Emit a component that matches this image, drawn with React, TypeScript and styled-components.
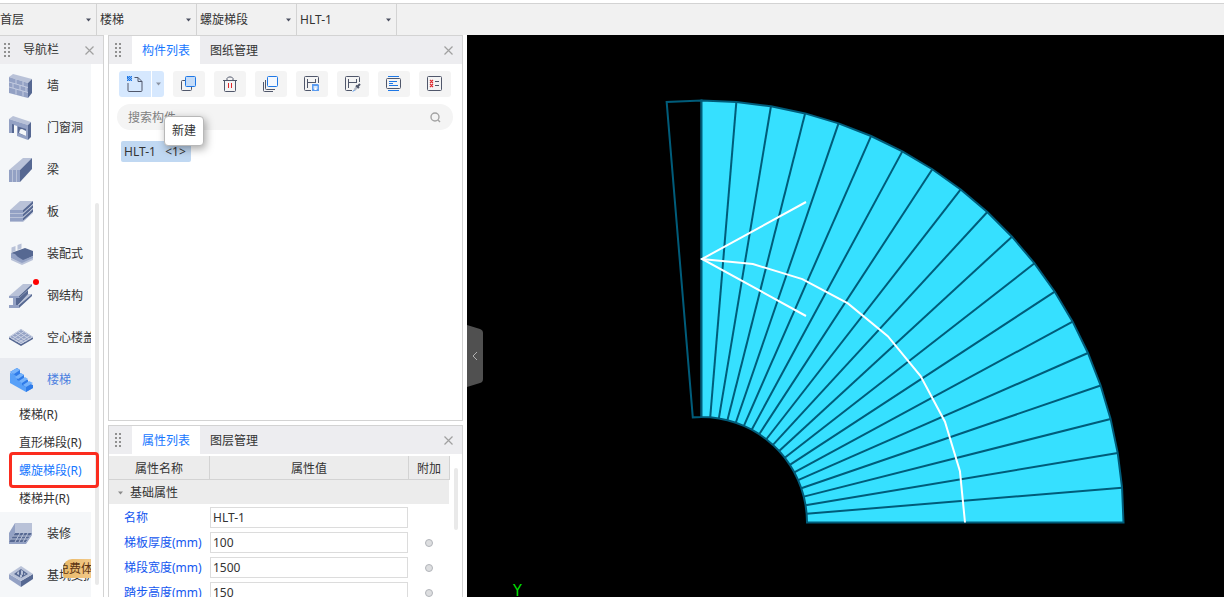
import React from "react";
import styled, { createGlobalStyle, css } from "styled-components";

const GlobalStyle = createGlobalStyle`
  * { box-sizing: border-box; }
  html, body, #root { height: 100%; }
  body {
    margin: 0;
    overflow: hidden;
    background: #fff;
    color: #333;
    font: 12px/20px "Noto Sans", "Noto Sans CJK SC", sans-serif;
  }
  button, input, select { font: inherit; color: inherit; margin: 0; }
  button { border: 0; padding: 0; background: none; cursor: pointer; }
  a { color: inherit; text-decoration: none; }
`;

const LINE = "#d3d3d3";
const LIGHT = "#b9c2d8";
const MID = "#93a1c4";
const DARK = "#566892";

const Page = styled.div`
  height: 100vh;
  display: flex;
  flex-direction: column;
  padding-top: 3px;
  overflow: hidden;
`;

/* ---------- context bar ---------- */

const ContextBar = styled.header`
  flex: none;
  display: flex;
  height: 32px;
  background: #f1f1f1;
  border-top: 1px solid ${LINE};
`;

const Picker = styled.label<{ $first?: boolean }>`
  position: relative;
  display: flex;
  width: ${(p) => (p.$first ? 97 : 100)}px;
  border-right: 1px solid ${LINE};

  select {
    appearance: none;
    width: 100%;
    border: 0;
    padding: 0 20px 0 ${(p) => (p.$first ? 0 : 3)}px;
    background: transparent;
    outline: none;
  }
  svg {
    position: absolute;
    right: 5px;
    top: 14px;
    pointer-events: none;
  }
`;

const Body = styled.main`
  flex: 1;
  min-height: 0;
  display: flex;
`;

/* ---------- shared dock pieces ---------- */

const DockHeader = styled.div`
  flex: none;
  display: flex;
  align-items: center;
  height: 28px;
  background: #ededf0;
`;

const CloseButton = styled.button`
  display: flex;
  margin-left: auto;
  margin-right: 9px;
`;

const Grip = styled.svg`
  flex: none;
  margin: 0 11px 0 6px;
`;

const ScrollThumb = styled.div<{ $top: number; $height: number }>`
  flex: none;
  width: 4px;
  height: ${(p) => p.$height}px;
  margin: ${(p) => p.$top}px 4px 0;
  border-radius: 2px;
  background: #e9e9e9;
`;

/* ---------- navigation ---------- */

const Nav = styled.nav`
  flex: none;
  display: flex;
  flex-direction: column;
  width: 104px;
  border: solid ${LINE};
  border-width: 1px 1px 0 0;

  ${Grip} { margin: 0 13px 0 4px; }
`;

const NavScroll = styled.div`
  flex: 1;
  min-height: 0;
  display: flex;
`;

const NavList = styled.ul`
  flex: 1;
  min-width: 0;
  margin: 0;
  padding: 0;
  overflow: hidden;
  list-style: none;
  background: #f5f7f9;
`;

const NavLink = styled.a<{ $active?: boolean }>`
  position: relative;
  display: flex;
  align-items: center;
  gap: 14px;
  height: 42px;
  padding: 2px 0 0 9px;
  white-space: nowrap;
  overflow: hidden;
  ${(p) => p.$active && css`background: #e9ebf0; color: #4b7fe0;`}

  svg { flex: none; overflow: visible; }
`;

const NewDot = styled.i`
  position: absolute;
  left: 33px;
  top: 5px;
  width: 6px;
  height: 6px;
  border-radius: 50%;
  background: #f00;
`;

const TrialBadge = styled.span`
  position: absolute;
  left: 63px;
  top: 5px;
  width: 40px;
  height: 19px;
  border-radius: 9px 0 0 3px;
  overflow: hidden;
  background: linear-gradient(90deg, #e8b765, #f6d19a);
  color: #5c3413;
  line-height: 20px;
  text-indent: -6px;
`;

const SubList = styled.ul`
  margin: 0;
  padding: 0;
  list-style: none;
  background: #fff;
`;

const SubLink = styled.a<{ $active?: boolean }>`
  display: block;
  height: 28px;
  padding: 1px 0 0 19px;
  line-height: 28px;
  white-space: nowrap;
  ${(p) => p.$active && css`color: #1677ff;`}
`;

const Highlight = styled.div`
  position: absolute;
  left: 9px;
  top: 452px;
  width: 90px;
  height: 36px;
  border: 3px solid #fb2c1e;
  border-radius: 4px;
  pointer-events: none;
`;

/* ---------- docks ---------- */

const Docks = styled.div`
  flex: none;
  display: flex;
  flex-direction: column;
  gap: 4px;
  width: 363px;
  padding: 0 4px;
`;

const Dock = styled.section<{ $height?: number }>`
  flex: ${(p) => (p.$height ? `0 0 ${p.$height}px` : "1")};
  min-height: 0;
  display: flex;
  flex-direction: column;
  overflow: hidden;
  border: 1px solid ${LINE};
  border-bottom-width: ${(p) => (p.$height ? 1 : 0)}px;
`;

const Tab = styled.button<{ $active?: boolean }>`
  height: 28px;
  padding: 2px 10px 0;
  ${(p) => p.$active && css`background: #fff; color: #1677ff;`}
`;

const Toolbar = styled.div`
  display: flex;
  gap: 9px;
  padding: 7px 10px;
`;

const toolFace = css`
  display: flex;
  align-items: center;
  justify-content: center;
  height: 26px;
`;

const Tool = styled.button`
  ${toolFace}
  width: 32px;
  border-radius: 3px;
  background: #f4f4f4;
`;

const SplitTool = styled.div`
  position: relative;
  display: flex;
  gap: 1px;
`;

const SplitMain = styled.button`
  ${toolFace}
  width: 32px;
  border-radius: 3px 0 0 3px;
  background: #d6e8fe;
`;

const SplitMore = styled.button`
  ${toolFace}
  width: 12px;
  border-radius: 0 3px 3px 0;
  background: #d6e8fe;
`;

const Tooltip = styled.div`
  position: absolute;
  z-index: 1;
  left: 45px;
  top: 45px;
  padding: 4px 7px;
  border: 1px solid #b8b8b8;
  border-radius: 4px;
  background: #fff;
  box-shadow: 2px 3px 9px rgba(0, 0, 0, 0.35);
  white-space: nowrap;
`;

const Search = styled.label`
  display: flex;
  align-items: center;
  height: 26px;
  margin: 0 9px 11px 8px;
  padding: 0 12px 0 11px;
  border-radius: 13px;
  background: #f4f4f4;

  input {
    flex: 1;
    min-width: 0;
    border: 0;
    padding: 2px 0 0;
    outline: none;
    background: transparent;
  }
  input::placeholder { color: #808080; opacity: 1; }
`;

const Component = styled.button`
  align-self: flex-start;
  height: 21px;
  margin-left: 12px;
  padding: 0 5px 0 3px;
  border-radius: 2px;
  background: #c0d8f2;
  white-space: pre;
`;

/* ---------- properties ---------- */

const PropertyScroll = styled.div`
  flex: 1;
  min-height: 0;
  display: flex;
  padding-top: 2px;
  overflow: hidden;
`;

const PropertyTable = styled.table`
  flex: 1;
  align-self: flex-start;
  table-layout: fixed;
  width: 100%;
  border-collapse: separate;
  border-spacing: 0;

  th, td { padding: 0; }
  td:last-child { padding-right: 2px; }
  thead th {
    height: 24px;
    padding-top: 2px;
    border: solid ${LINE};
    border-width: 0 1px 1px 0;
    background: #ececec;
    font-weight: 400;
  }
`;

const GroupCell = styled.th`
  height: 25px;
  border-right: 1px solid #fff;
  border-bottom: 1px solid #fff;
  background: #ececec;
  font-weight: 400;
  text-align: left;

  button {
    display: flex;
    align-items: center;
    gap: 7px;
    padding: 2px 0 0 9px;
  }
`;

const NameCell = styled.th`
  height: 25px;
  font-weight: 400;
  text-align: left;
  color: #1457f0;
  white-space: nowrap;

  label { padding-left: 15px; }
`;

const Field = styled.input`
  display: block;
  width: 198px;
  height: 21px;
  padding: 0 2px;
  border: 1px solid #dcdcdc;
  outline: none;
`;

const Extra = styled.input`
  appearance: none;
  display: block;
  width: 8px;
  height: 8px;
  && { margin: 0 auto; }
  border: 1px solid #b2b5ba;
  border-radius: 50%;
  background: #dddee0;
`;

/* ---------- model view ---------- */

const Viewport = styled.section`
  position: relative;
  flex: 1;
  min-width: 0;
  background: #000;
  overflow: hidden;
`;

const Drawing = styled.svg`
  display: block;
  width: 100%;
  height: 100%;
`;

const CollapseHandle = styled.button`
  position: absolute;
  left: 0;
  top: 290px;
  width: 16px;
  height: 62px;

  svg { display: block; }
`;

/* ---------- small glyphs ---------- */

const Caret = ({ color = "#4c5061" }: { color?: string }) => (
  <svg width="5" height="4" viewBox="0 0 5 4"><path d="M0 .5h5L2.500 3.500z" fill={color} /></svg>
);

const Cross = () => (
  <svg width="9" height="9" viewBox="0 0 9 9">
    <path d="M.5.5l8 8M8.500.5l-8 8" stroke="#a0a0a0" strokeWidth="1.200" fill="none" />
  </svg>
);

const GripDots = () => (
  <Grip width="6" height="14" viewBox="0 0 6 14">
    {[0, 4, 8, 12].map((y) => (
      <path key={y} d={`M0 ${y}h2v2h-2zM4 ${y}h2v2h-2z`} fill="#909090" />
    ))}
  </Grip>
);

/* ---------- navigation icons ---------- */

const navIcons: Record<string, React.ReactNode> = {
  wall: (
    <>
      <path d="M0 3l4-3 19 5-4 4z" fill={LIGHT} />
      <path d="M0 3l19 6v15L0 19z" fill={MID} />
      <path d="M19 9l4-4v14l-4 5z" fill={DARK} />
      <path d="M0 8l19 5.500M0 13l19 5.500M7 5v5M14 7.500v5M4 9v5M11 11v5M17 13v5M7 15v5.500M14 17v5.500" stroke="#c3cbe0" fill="none" />
    </>
  ),
  door: (
    <>
      <path d="M0 3l4-3 18 6-3 3z" fill={LIGHT} />
      <path d="M0 3l19 6v15L8 20V10L5 9v8H0z" fill={MID} />
      <path d="M19 9l3-3v15l-3 3z" fill={DARK} />
      <path d="M3 8l2 .6V17H3z" fill={DARK} />
      <path d="M9 10.500l8 2.500v7l-8-3z" fill={DARK} />
      <path d="M10 17l1-3.500 2-.5 4 2v5z" fill="#f5f7f9" />
    </>
  ),
  beam: (
    <>
      <path d="M0 12L14 0h9L11 12z" fill={LIGHT} />
      <path d="M0 12h11v12H0z" fill={MID} />
      <path d="M11 12L23 0v11L11 24z" fill={DARK} />
      <path d="M3.500 12v12M7.500 12v12" stroke={LIGHT} />
    </>
  ),
  slab: (
    <>
      <path d="M1 10L11 1h13L14 10z" fill={LIGHT} />
      {[10, 14, 18].map((y) => (
        <g key={y}>
          <path d={`M1 ${y}h13v3H1z`} fill={MID} />
          <path d={`M14 ${y}l10-9v3L14 ${y + 3}z`} fill={DARK} />
          <path d={`M1 ${y + 3.5}h13l10-9`} stroke={LIGHT} fill="none" />
        </g>
      ))}
    </>
  ),
  prefab: (
    <>
      <path d="M2.500 5.500l4-1.500v5l-4 1.500zM8.500 3l4-1.500v5l-4 1.500z" fill={LIGHT} />
      <path d="M2 11l14-5 8 3v5l-10 5z" fill={DARK} />
      <path d="M2 11l4 1 3 3 5 3 10-4v3l-11 5-11-6z" fill={MID} />
      <path d="M2 16l11 5 11-5v2l-11 5-11-5z" fill={LIGHT} />
    </>
  ),
  steel: (
    <>
      <path d="M0 12L14 0h9L10 12z" fill={LIGHT} />
      <path d="M7 14h3L19 6v5L9 21H7z" fill={DARK} />
      <path d="M9 21l10-11h4L10 21z" fill={LIGHT} />
      <path d="M10 12L23 0v2L10 14zM10 21l13-11v2L10 24z" fill={DARK} />
      <path d="M0 12h10v2H7v7h3v3H0v-3h4v-7H0z" fill={MID} />
    </>
  ),
  hollow: (
    <>
      <path d="M0 11l12 7 12-7v2l-12 7-12-7z" fill={DARK} />
      <path d="M12 3l12 8-12 7L0 11z" fill={MID} />
      <path d="M12 3.500L23.500 11 12 17.500.5 11zM9 5.500l11.500 7.500M6 7.500L17.500 15M3 9.500L14.500 16.500M15 5.500L3.500 13M18 7.500L6.500 15M21 9.500L9.500 16.500" stroke="#c9d0e2" fill="none" />
    </>
  ),
  stair: (
    <>
      <path d="M1 5v10l16 9 7-4v-2L8 6z" fill="#58a0f8" />
      <path d="M1 4l7-4 3 2v3l4 2v3l4 2v3l5 2v3l-7 4v-5l-4-2v-3l-5-2v-3L6 7z" fill="#2f7be8" />
      <path d="M1 4l7-4 3 2-6 4zM6 9l6-4 3 2-6 4zM10 13l6-4 3 2-6 4zM14 17l6-4 4 2-7 4z" fill="#76b3fc" />
    </>
  ),
  finish: (
    <>
      <path d="M6 1h17v10H6L0 20v-9z" fill={MID} />
      <path d="M6 1h17v10H6z" fill={LIGHT} />
      <path d="M6 11h17l-6 9H0z" fill={DARK} />
      <path d="M4 14h17M2 17h17M11 11l-5 9M15 11l-5 9M19 11l-5 9" stroke={LIGHT} />
      <path d="M0 20h17l6-9v2l-6 9H0z" fill={MID} />
    </>
  ),
  pit: (
    <>
      <path d="M0 10l12 7v6L0 15z" fill={MID} />
      <path d="M12 17l12-7v5l-12 8z" fill={DARK} />
      <path d="M12 2l12 8-12 7L0 10z" fill={LIGHT} />
      <path d="M12 5l7 5-7 4-7-4z" fill={DARK} />
      <path d="M8 9l2-2v4l-2-1zM12 6l2 1v4l-2-1zM11 11l2-1v3l-2 1zM15 9l2 1-2 1z" fill={LIGHT} />
    </>
  ),
};

const NavIcon = ({ name }: { name: string }) => (
  <svg width="24" height="24" viewBox="0 0 24 24">{navIcons[name]}</svg>
);

/* ---------- toolbar icons ---------- */

const INK = "#50576b";
const BLUE = "#1f78e6";

const toolIcons: Record<string, React.ReactNode> = {
  add: (
    <>
      <path d="M7.500 1.500H11l4 4v9a1 1 0 0 1-1 1H2a1 1 0 0 1-1-1V7M11 1.500v4h4" stroke={INK} fill="none" />
      <path d="M0 0h1v1h1v1H0zM2 0h1v1H2zM4 0h1v1H4zM1 1h1v1H1zM3 1h1v1H3zM0 2h1v1H0zM2 2h1v1H2zM4 2h1v1H4zM1 3h1v1H1zM3 3h1v1H3zM0 4h1v1H0zM2 4h1v1H2zM4 4h1v1H4z" fill={BLUE} />
      <path d="M0 0h5v5H0z" fill={BLUE} opacity=".45" />
    </>
  ),
  copy: (
    <>
      <path d="M4.500 4.500h-3a1 1 0 0 0-1 1v8a1 1 0 0 0 1 1h8a1 1 0 0 0 1-1v-3" stroke={INK} fill="none" />
      <rect x="4.500" y=".5" width="10" height="10" rx="1" stroke={BLUE} fill="#c5dcf8" />
    </>
  ),
  remove: (
    <>
      <path d="M1 4.500h14M5 4V2.500l1.500-1.500h3L11 2.500V4M2.500 4.500v10a1 1 0 0 0 1 1h9a1 1 0 0 0 1-1v-10" stroke={INK} fill="none" />
      <path d="M6.500 7v5M9.500 7v5" stroke="#e0252b" />
    </>
  ),
  layers: (
    <>
      <path d="M.5 6v8.500a1 1 0 0 0 1 1H10M2.500 4v8.500a1 1 0 0 0 1 1H12" stroke={INK} fill="none" />
      <rect x="4.500" y=".5" width="10" height="10" rx="1" stroke={BLUE} fill="#f4f8fe" />
    </>
  ),
  save: (
    <>
      <path d="M7 14.500H1.500a1 1 0 0 1-1-1v-12a1 1 0 0 1 1-1h12a1 1 0 0 1 1 1V7M3.500 3v9M3.500 6.500H11M11.500 3v4" stroke={INK} fill="none" />
      <path d="M8 8h6l1 1v6H8z" fill="#5b9cf0" />
      <path d="M9.500 10h4v3h-4z" fill="#d7e6fb" />
      <path d="M10 14l1.500-2.500L13 14z" fill="#fff" />
    </>
  ),
  pick: (
    <>
      <path d="M7 14.500H1.500a1 1 0 0 1-1-1v-12a1 1 0 0 1 1-1h12a1 1 0 0 1 1 1V6M3.500 3v9M3.500 6.500H11M11.500 3v4" stroke={INK} fill="none" />
      <path d="M9.500 14l3-3.500" stroke="#b4b9c4" strokeWidth="2.500" />
      <path d="M11 9.500l3 2.500M13 10l2-2" stroke={INK} strokeWidth="2" />
      <path d="M8 15.500l1.500-1.500" stroke={BLUE} />
    </>
  ),
  list: (
    <>
      <path d="M2 .5h11M2 14.500h11" stroke={BLUE} />
      <rect x=".5" y="2.500" width="14" height="10" rx="1" stroke={INK} fill="none" />
      <path d="M3 5.500h8M3 7.500h4M3 9.500h9" stroke={BLUE} />
    </>
  ),
  check: (
    <>
      <rect x=".5" y=".5" width="14" height="14" rx="1" stroke={INK} fill="none" />
      <path d="M3 4l3 3M6 4l-3 3M3 8l3 3M6 8l-3 3" stroke="#e02a2f" strokeWidth="1.200" />
      <path d="M8 5.500h4M8 9.500h4" stroke={INK} />
    </>
  ),
};

const ToolIcon = ({ name }: { name: string }) => (
  <svg width="16" height="16" viewBox="0 0 16 16">{toolIcons[name]}</svg>
);

/* ---------- spiral stair ---------- */

const STEPS = 19;
const CENTER = { x: 234.5, y: 487.5 };
const INNER = 105.5;
const OUTER = 422;
const WALK = 263.5;

const polar = (radius: number, turn: number) => {
  const a = (turn * Math.PI) / 2;
  return `${(CENTER.x + radius * Math.sin(a)).toFixed(2)},${(CENTER.y - radius * Math.cos(a)).toFixed(2)}`;
};

const range = (n: number) => Array.from({ length: n + 1 }, (_, i) => i / n);

const SpiralStair = () => {
  const outer = range(STEPS).map((t) => polar(OUTER, t));
  const inner = range(STEPS).map((t) => polar(INNER, t));
  const before = -1 / STEPS;
  return (
    <g strokeWidth="2" fill="none">
      <polygon points={[polar(INNER, 0), polar(INNER, before), polar(OUTER, before), polar(OUTER, 0)].join(" ")} stroke="#005c7a" />
      <polygon points={[...outer, ...[...inner].reverse()].join(" ")} fill="#36e0ff" stroke="#005c7a" />
      {outer.slice(1, -1).map((p, i) => (
        <polyline key={p} points={`${inner[i + 1]} ${p}`} stroke="#005c7a" />
      ))}
      <polyline points={range(8).map((t) => polar(WALK, t)).join(" ")} stroke="#fff" />
      <polyline points="339,167 235,224 339,281" stroke="#fff" />
    </g>
  );
};

/* ---------- data ---------- */

const pickers = ["首层", "楼梯", "螺旋梯段", "HLT-1"];

const navBefore = [
  ["wall", "墙"], ["door", "门窗洞"], ["beam", "梁"], ["slab", "板"],
  ["prefab", "装配式"], ["steel", "钢结构"], ["hollow", "空心楼盖"],
];

const stairKinds = ["楼梯(R)", "直形梯段(R)", "螺旋梯段(R)", "楼梯井(R)"];

const tools = [
  ["copy", "复制"], ["remove", "删除"], ["layers", "层间复制"], ["save", "存档"],
  ["pick", "提取"], ["list", "列表"], ["check", "检查"],
];

const properties = [
  { name: "名称", value: "HLT-1", extra: false },
  { name: "梯板厚度(mm)", value: "100", extra: true },
  { name: "梯段宽度(mm)", value: "1500", extra: true },
  { name: "踏步高度(mm)", value: "150", extra: true },
];

export default function App() {
  return (
    <Page>
      <GlobalStyle />
      <ContextBar>
        {pickers.map((text, i) => (
          <Picker key={text} $first={i === 0}>
            <select aria-label={text}><option>{text}</option></select>
            <Caret />
          </Picker>
        ))}
      </ContextBar>
      <Body>
        <Nav>
          <DockHeader>
            <GripDots />
            导航栏
            <CloseButton aria-label="关闭导航栏"><Cross /></CloseButton>
          </DockHeader>
          <NavScroll>
            <NavList>
              {navBefore.map(([icon, text]) => (
                <li key={icon}>
                  <NavLink href="#">
                    <NavIcon name={icon} />{text}
                    {icon === "steel" && <NewDot />}
                  </NavLink>
                </li>
              ))}
              <li>
                <NavLink href="#" $active><NavIcon name="stair" />楼梯</NavLink>
                <SubList>
                  {stairKinds.map((text, i) => (
                    <li key={text}><SubLink href="#" $active={i === 2}>{text}</SubLink></li>
                  ))}
                </SubList>
              </li>
              <li><NavLink href="#"><NavIcon name="finish" />装修</NavLink></li>
              <li>
                <NavLink href="#">
                  <NavIcon name="pit" />基坑支护
                  <TrialBadge>免费体验</TrialBadge>
                </NavLink>
              </li>
            </NavList>
            <ScrollThumb $top={139} $height={382} />
          </NavScroll>
          <Highlight />
        </Nav>

        <Docks>
          <Dock $height={386}>
            <DockHeader>
              <GripDots />
              <Tab $active>构件列表</Tab>
              <Tab>图纸管理</Tab>
              <CloseButton aria-label="关闭构件列表"><Cross /></CloseButton>
            </DockHeader>
            <Toolbar>
              <SplitTool>
                <SplitMain aria-label="新建"><ToolIcon name="add" /></SplitMain>
                <SplitMore aria-label="更多新建"><Caret color="#8a93a3" /></SplitMore>
                <Tooltip role="tooltip">新建</Tooltip>
              </SplitTool>
              {tools.map(([icon, label]) => (
                <Tool key={icon} aria-label={label}><ToolIcon name={icon} /></Tool>
              ))}
            </Toolbar>
            <Search>
              <input aria-label="搜索构件" placeholder="搜索构件..." />
              <svg width="11" height="11" viewBox="0 0 11 11">
                <circle cx="5" cy="5" r="4" stroke="#a3a3a3" strokeWidth="1.400" fill="none" />
                <path d="M8 8l2 2" stroke="#a3a3a3" strokeWidth="1.400" />
              </svg>
            </Search>
            <Component>{"HLT-1   <1>"}</Component>
          </Dock>

          <Dock>
            <DockHeader>
              <GripDots />
              <Tab $active>属性列表</Tab>
              <Tab>图层管理</Tab>
              <CloseButton aria-label="关闭属性列表"><Cross /></CloseButton>
            </DockHeader>
            <PropertyScroll>
              <PropertyTable>
                <colgroup>
                  <col style={{ width: 101 }} />
                  <col />
                  <col style={{ width: 41 }} />
                </colgroup>
                <thead>
                  <tr>
                    <th scope="col">属性名称</th>
                    <th scope="col">属性值</th>
                    <th scope="col">附加</th>
                  </tr>
                </thead>
                <tbody>
                  <tr>
                    <GroupCell colSpan={3} scope="rowgroup">
                      <button><Caret color="#8a8a8a" />基础属性</button>
                    </GroupCell>
                  </tr>
                  {properties.map((p, i) => (
                    <tr key={p.name}>
                      <NameCell scope="row"><label htmlFor={`prop-${i}`}>{p.name}</label></NameCell>
                      <td><Field id={`prop-${i}`} defaultValue={p.value} /></td>
                      <td>{p.extra && <Extra type="checkbox" aria-label={`附加 ${p.name}`} />}</td>
                    </tr>
                  ))}
                </tbody>
              </PropertyTable>
              <ScrollThumb $top={12} $height={62} />
            </PropertyScroll>
          </Dock>
        </Docks>

        <Viewport>
          <Drawing>
            <SpiralStair />
            <text x="46" y="561" fill="#00e000" fontFamily="DejaVu Sans Condensed, DejaVu Sans, sans-serif" fontSize="16">Y</text>
          </Drawing>
          <CollapseHandle aria-label="收起面板">
            <svg width="16" height="62" viewBox="0 0 16 62">
              <path d="M0 0l13 4q3 1 3 4v46q0 3-3 4L0 62z" fill="#505050" />
              <path d="M10 27l-4 4 4 4" stroke="#b0b0b0" fill="none" />
            </svg>
          </CollapseHandle>
        </Viewport>
      </Body>
    </Page>
  );
}
